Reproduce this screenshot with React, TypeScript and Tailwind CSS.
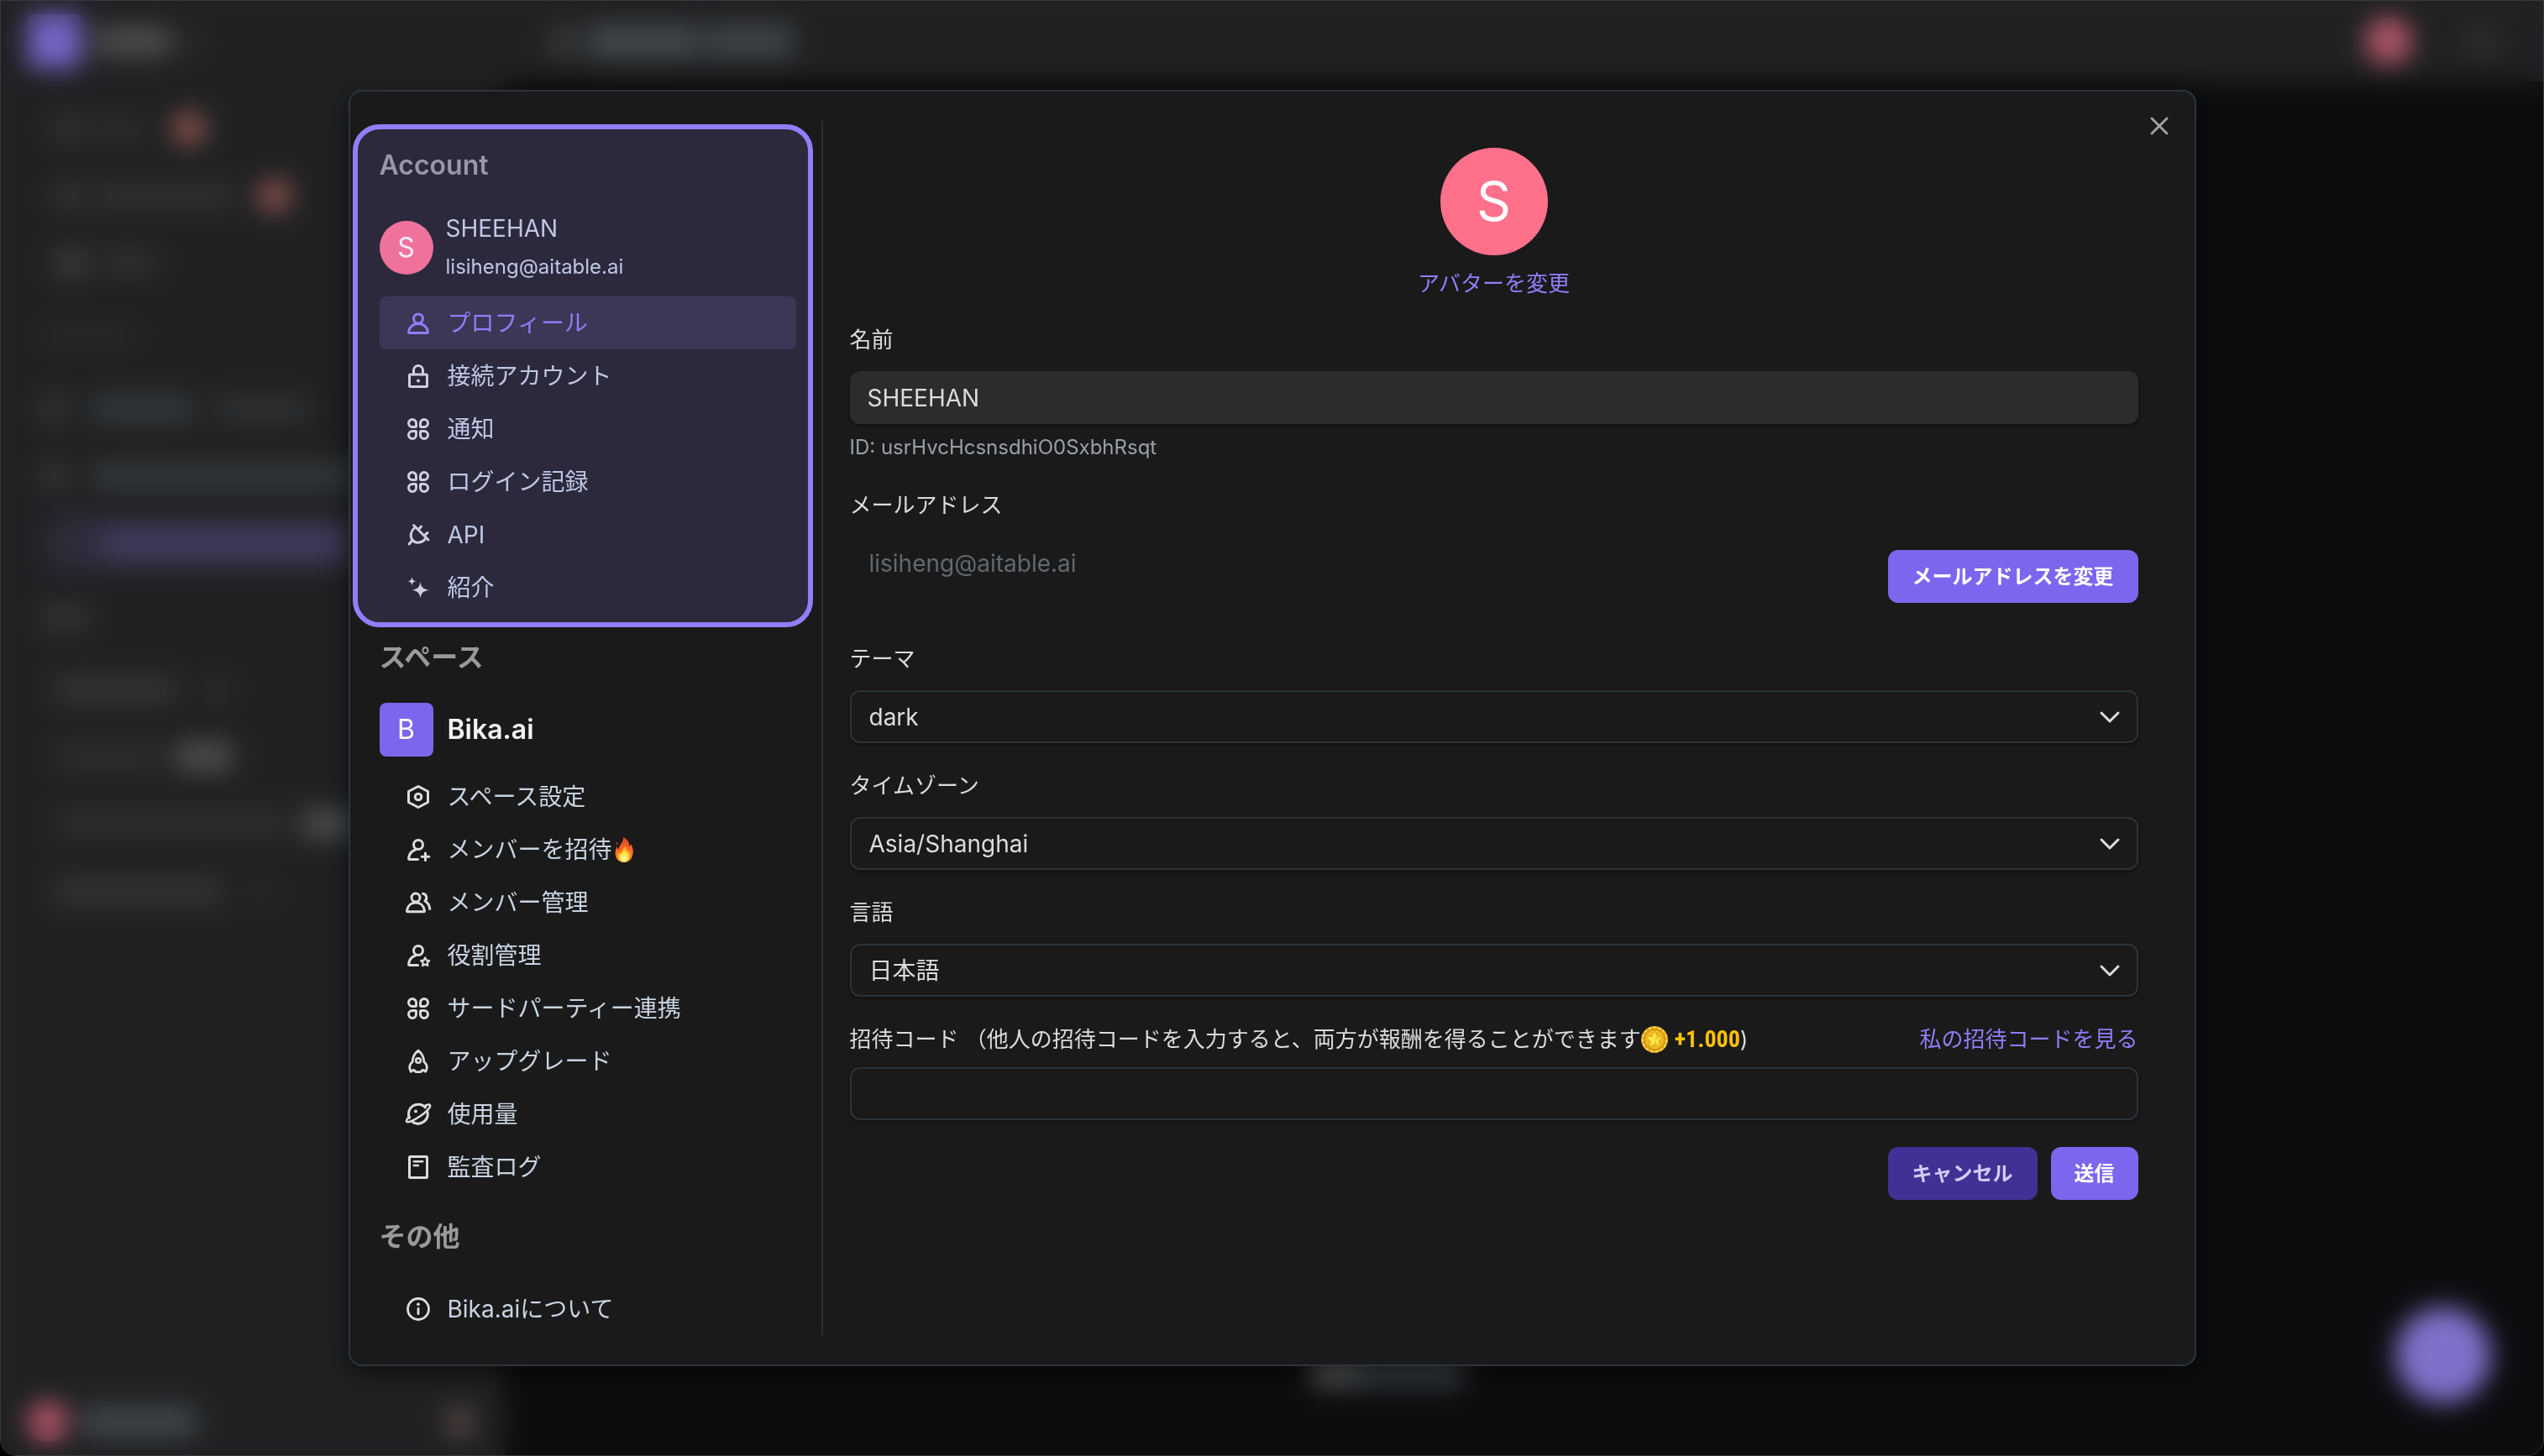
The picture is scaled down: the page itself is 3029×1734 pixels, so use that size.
import type { ReactNode } from "react";

type IconProps = { children: ReactNode };

function Icon({ children }: IconProps) {
  return (
    <svg
      viewBox="0 0 32 32"
      className="size-8 shrink-0"
      fill="none"
      stroke="currentColor"
      strokeWidth="3"
      strokeLinecap="round"
      strokeLinejoin="round"
      aria-hidden="true"
    >
      {children}
    </svg>
  );
}

const UserIcon = () => (
  <Icon>
    <circle cx="16" cy="10.5" r="5.5" />
    <path d="M5.6 27.5h20.8a1.1 1.1 0 0 0 1.1-1.3C26.6 20.5 22 16.5 16 16.5S5.4 20.5 4.5 26.2a1.1 1.1 0 0 0 1.1 1.3z" />
  </Icon>
);
const LockIcon = () => (
  <Icon>
    <rect x="5.5" y="14" width="21" height="14.5" rx="1" />
    <path d="M10.5 14V9a5.5 5.5 0 0 1 11 0v5" />
    <circle cx="16" cy="21.5" r="2" fill="currentColor" stroke="none" />
  </Icon>
);
const PetalsIcon = () => (
  <Icon>
    <path d="M13.5 9a4.5 4.5 0 1 0-4.5 4.5h3.5a1 1 0 0 0 1-1z" />
    <path d="M18.5 9a4.5 4.5 0 1 1 4.5 4.5h-3.5a1 1 0 0 1-1-1z" />
    <path d="M13.5 23a4.5 4.5 0 1 1-4.5-4.5h3.5a1 1 0 0 1 1 1z" />
    <path d="M18.5 23a4.5 4.5 0 1 0 4.5-4.5h-3.5a1 1 0 0 0-1 1z" />
  </Icon>
);
const PlugIcon = () => (
  <Icon>
    <path d="M10.5 4.500 28 22" />
    <path d="M12.5 6.5C7.5 11 5.5 17 9 22c4 5 11.500 4 16.500-2.500" />
    <path d="M9 22.500 5 27" />
    <path d="m16.500 9.500 3-3.500M23.500 16.500l3.500-3" />
  </Icon>
);
const SparkleIcon = () => (
  <Icon>
    <g fill="currentColor" stroke="none">
      <path d="M18.500 9c1 6 3 8.500 10.500 9.800-7.500 1.200-9.500 3.700-10.500 9.700-1-6-3-8.500-9.800-9.700C15.500 17.500 17.500 15 18.500 9z" />
      <path d="M8.500 3c.6 3.600 1.600 4.600 5 5.300-3.400.7-4.400 1.700-5 5.300-.6-3.600-1.600-4.600-5.300-5.300C6.900 7.600 7.900 6.600 8.500 3z" />
    </g>
  </Icon>
);
const HexIcon = () => (
  <Icon>
    <path d="M16 3.5 27.5 9.5v13L16 28.5 4.5 22.5v-13z" />
    <circle cx="16" cy="16" r="3.8" />
  </Icon>
);
const UserPlusIcon = () => (
  <Icon>
    <circle cx="16" cy="10" r="5.5" />
    <path d="M15.5 27.5H5.6a1.1 1.1 0 0 1-1.1-1.3c.7-5 3.7-8.7 8-10.2" />
    <path d="M24.5 20v8.500M20.200 24.200h8.600" />
  </Icon>
);
const UsersIcon = () => (
  <Icon>
    <circle cx="13" cy="10" r="5" />
    <path d="M3.5 26.8h19a1 1 0 0 0 1-1.2C22.7 19.5 18.5 16 13 16S3.300 19.500 2.500 25.600a1 1 0 0 0 1 1.200z" />
    <path d="M21.500 5.200a5 5 0 0 1 2.500 8.800c3.500 2 5.300 5 5.800 9.500" />
  </Icon>
);
const UserStarIcon = () => (
  <Icon>
    <circle cx="16" cy="10" r="5.5" />
    <path d="M15.5 27.5H5.6a1.1 1.1 0 0 1-1.1-1.3c.7-5 3.7-8.7 8-10.2" />
    <path
      strokeWidth="2.2"
      d="m24.200 18.500 1.600 3.100 3.400.5-2.500 2.400.6 3.500-3.100-1.600-3.100 1.600.6-3.500-2.500-2.400 3.400-.5z"
    />
  </Icon>
);
const RocketIcon = () => (
  <Icon>
    <path
      strokeWidth="2.8"
      d="M16 3.200c-4.600 3.600-6.800 8.600-6.800 13.300-2.200 1.800-3.500 4-3.500 6.500 0 2 .6 3.700 1.600 5.300 1.200-1.200 2.400-1.800 3.800-1.800l1.900 2.200h6l1.900-2.200c1.400 0 2.600.6 3.800 1.800 1-1.600 1.600-3.300 1.600-5.300 0-2.500-1.300-4.700-3.500-6.500 0-4.700-2.200-9.700-6.800-13.300z"
    />
    <circle cx="16" cy="15" r="2.8" strokeWidth="2.6" />
  </Icon>
);
const PlanetIcon = () => (
  <Icon>
    <path d="M24.500 8A11.500 11.500 0 0 0 5.500 20.500" />
    <path d="M9 25A11.500 11.500 0 0 0 27 13.500" />
    <path
      strokeWidth="2.6"
      d="M23 6.500c3.600-1.900 6.300-2.400 7-1.200 1.200 2-4 8-12 13.200S3.400 26.600 2.200 24.600c-.7-1.200.6-3.400 3.300-6"
    />
    <circle cx="13" cy="12.500" r="2" fill="currentColor" stroke="none" />
  </Icon>
);
const LogIcon = () => (
  <Icon>
    <rect x="5.5" y="3.5" width="21" height="25" rx="1" />
    <path strokeWidth="2.6" d="M10.800 9.200h10.400M10.800 14h5" />
  </Icon>
);
const InfoIcon = () => (
  <Icon>
    <circle cx="16" cy="16" r="12.500" strokeWidth="2.8" />
    <path d="M16 15.500v6.300" strokeWidth="2.8" />
    <circle cx="16" cy="10.300" r="1.9" fill="currentColor" stroke="none" />
  </Icon>
);

const Flame = () => (
  <svg viewBox="0 0 28 34" className="h-8 w-7 shrink-0" role="img" aria-label="炎">
    <defs>
      <linearGradient id="flameOuter" x1="0" y1="0" x2="0" y2="1">
        <stop offset="0" stopColor="#e8401c" />
        <stop offset="0.5" stopColor="#fb6a21" />
        <stop offset="1" stopColor="#fd9a22" />
      </linearGradient>
      <radialGradient id="flameInner" cx="0.5" cy="0.8" r="0.7">
        <stop offset="0" stopColor="#fffbc0" />
        <stop offset="0.5" stopColor="#ffe23c" />
        <stop offset="1" stopColor="#fd9a22" />
      </radialGradient>
    </defs>
    <path
      fill="url(#flameOuter)"
      d="M13 1c6 3 8 7 7.500 12 1.200-.8 1.600-2.200 1.500-3.800C25 13 26 17.500 25.200 22 24 29 19.500 33 14 33S3.500 29 3 22.500C2.700 18.500 4 15 5 12.500c.4 2 1 3.500 2.300 4.500C7 11.500 13.500 8 13 1z"
    />
    <path fill="#e8401c" d="M5 7c1.500 1.500 1.500 3 .5 4.500C4.300 10.300 4.300 8.700 5 7z" />
    <path
      fill="url(#flameInner)"
      d="M14.500 12c3 3 2.500 6 3.500 8 .8-.5 1.200-1.400 1.400-2.300C21.500 21 22 24 20.800 27c-1.300 3.600-3.900 5.300-6.800 5.300-3.500 0-6.300-2.300-7-5.800-.5-2.700.3-4.800 1.500-6.500.4 1.300 1 2 2 2.500.2-4.500 4.200-6 4-10.500z"
    />
  </svg>
);

const Coin = () => (
  <svg viewBox="0 0 32 32" className="size-8 shrink-0" aria-hidden="true">
    <circle cx="16" cy="16" r="16" fill="#e0a016" />
    <circle cx="16" cy="16" r="14.500" fill="none" stroke="#f6d65a" strokeWidth="2" strokeDasharray="4 2" />
    <circle cx="16" cy="16" r="12" fill="#eeb91f" stroke="#c98a10" strokeWidth="1" />
    <path
      fill="#fbe648"
      stroke="#d39a12"
      strokeWidth="0.8"
      strokeLinejoin="round"
      d="m16 5.500 3.100 6.700 7.200.9-5.300 5 1.400 7.200-6.400-3.600-6.400 3.600 1.400-7.200-5.300-5 7.200-.9z"
    />
    <path fill="#f3c92c" d="M16 5.500v11.200l6.400 8.600-6.400-3.600zM26.300 13.100 16 16.700l3.100-4.500z" />
  </svg>
);

const Chevron = () => (
  <svg
    viewBox="0 0 32 32"
    className="pointer-events-none absolute top-4 right-[18px] size-8 text-[#dcdcdc]"
    fill="none"
    stroke="currentColor"
    strokeWidth="3"
    strokeLinecap="round"
    strokeLinejoin="round"
    aria-hidden="true"
  >
    <path d="m6 11 10 10 10-10" />
  </svg>
);

type Item = { label: string; icon: ReactNode; active?: boolean; flame?: boolean };

const accountItems: Item[] = [
  { label: "プロフィール", icon: <UserIcon />, active: true },
  { label: "接続アカウント", icon: <LockIcon /> },
  { label: "通知", icon: <PetalsIcon /> },
  { label: "ログイン記録", icon: <PetalsIcon /> },
  { label: "API", icon: <PlugIcon /> },
  { label: "紹介", icon: <SparkleIcon /> },
];
const spaceItems: Item[] = [
  { label: "スペース設定", icon: <HexIcon /> },
  { label: "メンバーを招待", icon: <UserPlusIcon />, flame: true },
  { label: "メンバー管理", icon: <UsersIcon /> },
  { label: "役割管理", icon: <UserStarIcon /> },
  { label: "サードパーティー連携", icon: <PetalsIcon /> },
  { label: "アップグレード", icon: <RocketIcon /> },
  { label: "使用量", icon: <PlanetIcon /> },
  { label: "監査ログ", icon: <LogIcon /> },
];
const otherItems: Item[] = [{ label: "Bika.aiについて", icon: <InfoIcon /> }];

function Menu({ items }: { items: Item[] }) {
  return (
    <ul>
      {items.map((item) => (
        <li key={item.label}>
          <button
            type="button"
            aria-current={item.active ? "page" : undefined}
            className={
              item.active
                ? "flex h-[63px] w-full items-center gap-[19px] rounded-lg bg-[#2f2b3b] pl-[30px] text-left text-[28px] text-[#8f7ef8]"
                : "flex h-[63px] w-full items-center gap-[19px] rounded-lg pl-[30px] text-left text-[28px] text-[#dcdcdc]"
            }
          >
            {item.icon}
            <span className={item.active ? "flex items-center" : "flex items-center text-[#c8d3e2]"}>
              {item.label}
              {item.flame && <Flame />}
            </span>
          </button>
        </li>
      ))}
    </ul>
  );
}

function Heading({ children }: { children: ReactNode }) {
  return <h2 className="mb-8 text-[32px] leading-10 font-semibold text-[#9a9a9a]">{children}</h2>;
}

function Sidebar() {
  return (
    <nav className="w-[563px] shrink-0 border-r-2 border-[#303030] pt-[33px] pr-[30px] pl-[35px]">
      <section className="relative">
        <Heading>Account</Heading>
        <div className="mb-3 flex items-center gap-[15px]">
          <span className="flex size-16 shrink-0 items-center justify-center rounded-full bg-[#ff708b] text-[32px] text-white">
            S
          </span>
          <div className="text-[#c8d3e2]">
            <p className="text-[28px] leading-[46px]">SHEEHAN</p>
            <p className="text-[24px] leading-[46px]">lisiheng@aitable.ai</p>
          </div>
        </div>
        <Menu items={accountItems} />
        <div className="pointer-events-none absolute -top-[29px] -right-5 -bottom-4 -left-8 rounded-[32px] border-[6px] border-[#907ff8] bg-[#907ff8]/15" />
      </section>
      <section className="mt-8">
        <Heading>スペース</Heading>
        <div className="mb-4 flex items-center gap-[17px] pt-0.5">
          <span className="flex size-16 shrink-0 items-center justify-center rounded-lg bg-[#7b67ee] text-[32px] text-white">
            B
          </span>
          <p className="text-[32px] leading-10 font-semibold text-[#f3f4f8]">Bika.ai</p>
        </div>
        <Menu items={spaceItems} />
      </section>
      <section className="mt-8">
        <Heading>その他</Heading>
        <div className="pt-0.5">
          <Menu items={otherItems} />
        </div>
      </section>
    </nav>
  );
}

function SelectField({ id, label, value, options }: { id: string; label: string; value: string; options: string[] }) {
  return (
    <div>
      <label htmlFor={id} className="mb-[18px] block text-[26px] leading-[38px] text-[#dcdcdc]">
        {label}
      </label>
      <div className="relative">
        <select
          id={id}
          defaultValue={value}
          className="h-[63px] w-full appearance-none rounded-xl border-2 border-[#2d333b] bg-[#1a1a1a] px-[21px] text-[28px] text-[#dcdcdc] shadow-[0_2px_4px_rgba(0,0,0,0.4)]"
        >
          {options.map((option) => (
            <option key={option}>{option}</option>
          ))}
        </select>
        <Chevron />
      </div>
    </div>
  );
}

function ProfileForm() {
  return (
    <form className="min-w-0 flex-1 pt-8 pr-[67px] pl-8" onSubmit={(event) => event.preventDefault()}>
      <div className="flex flex-col items-center gap-[14px]">
        <span className="flex size-32 items-center justify-center rounded-full bg-[#ff708b] text-[64px] text-white">S</span>
        <button type="button" className="text-[26px] leading-10 text-[#8f7ef8]">
          アバターを変更
        </button>
      </div>

      <div className="mt-7">
        <label htmlFor="name" className="mb-[18px] block text-[26px] leading-[38px] text-[#dcdcdc]">
          名前
        </label>
        <input
          id="name"
          defaultValue="SHEEHAN"
          className="block h-[63px] w-full rounded-xl bg-[#2c2c2c] px-[21px] text-[28px] text-[#dcdcdc] shadow-[0_2px_4px_rgba(0,0,0,0.4)]"
        />
        <p className="mt-[10px] text-[24px] leading-9 text-[#99a0aa]">ID: usrHvcHcsnsdhiO0SxbhRsqt</p>
      </div>

      <div className="mt-8">
        <label htmlFor="email" className="mb-[18px] block text-[26px] leading-[38px] text-[#dcdcdc]">
          メールアドレス
        </label>
        <div className="flex items-start gap-4">
          <input
            id="email"
            disabled
            defaultValue="lisiheng@aitable.ai"
            className="h-[63px] min-w-0 flex-1 rounded-xl border-2 border-[#191b1d] px-[21px] text-[28px] text-[#616870]"
          />
          <button
            type="button"
            className="mt-4 h-[63px] rounded-xl bg-[#7b67ee] px-[29px] text-[24px] font-bold text-white"
          >
            メールアドレスを変更
          </button>
        </div>
      </div>

      <div className="mt-12 flex flex-col gap-8">
        <SelectField id="theme" label="テーマ" value="dark" options={["dark", "light"]} />
        <SelectField id="timezone" label="タイムゾーン" value="Asia/Shanghai" options={["Asia/Shanghai", "Asia/Tokyo"]} />
        <SelectField id="language" label="言語" value="日本語" options={["日本語", "English"]} />
        <div>
          <div className="mb-[14px] flex items-center justify-between text-[26px] leading-[38px] text-[#dcdcdc]">
            <label htmlFor="invite" className="flex items-center whitespace-pre">
              招待コード （他人の招待コードを入力すると、両方が報酬を得ることができます
              <Coin />
              <span className="ml-2 font-['Liberation_Sans_Narrow','Roboto_Condensed',Roboto] text-[28px] font-bold text-[#ffc107]">
                +1.000
              </span>
              )
            </label>
            <a href="#invite-code" className="text-[#8f7ef8]">
              私の招待コードを見る
            </a>
          </div>
          <input
            id="invite"
            className="block h-[63px] w-full rounded-xl border-2 border-[#2d333b] px-[22px] text-[28px] text-[#dcdcdc] shadow-[0_2px_4px_rgba(0,0,0,0.4)]"
          />
        </div>
      </div>

      <div className="mt-8 flex justify-end gap-4">
        <button type="button" className="h-[63px] rounded-xl bg-[#403195] px-[29px] text-[24px] font-bold text-[#d3cbfb]">
          キャンセル
        </button>
        <button type="submit" className="h-[63px] rounded-xl bg-[#7b67ee] px-7 text-[24px] font-bold text-white">
          送信
        </button>
      </div>
    </form>
  );
}

function Backdrop() {
  return (
    <div
      aria-hidden="true"
      className="absolute inset-0 flex overflow-hidden rounded-b-[20px] border border-[#36393c] bg-[#0c0d0f]"
    >
      <div className="flex w-[600px] shrink-0 flex-col bg-[#202123] px-8 py-4">
        <div className="flex h-16 items-center gap-4">
          <div className="size-16 rounded-lg bg-[#7564c6]" />
          <div className="h-9 w-[90px] bg-[#4c4d4e]" />
          <div className="h-5 w-4 bg-[#333436]" />
        </div>
        <div className="mt-8 flex h-20 items-center pl-8">
          <div className="h-7 w-8 bg-[#353638]" />
          <div className="ml-3 h-6 w-16 bg-[#2d2e30]" />
          <div className="ml-8 size-10 rounded-full bg-[#8a524c]" />
        </div>
        <div className="flex h-20 items-center pl-8">
          <div className="h-7 w-8 bg-[#353638]" />
          <div className="ml-3 h-7 w-[170px] bg-[#303133]" />
          <div className="ml-7 size-10 rounded-full bg-[#8a524c]" />
        </div>
        <div className="flex h-20 items-center gap-4 pl-8">
          <div className="h-9 w-10 bg-[#38393b]" />
          <div className="h-7 w-16 bg-[#303133]" />
        </div>
        <div className="mt-9 ml-4 h-5 w-28 bg-[#292a2c]" />
        <div className="mt-[38px] flex h-20 items-center gap-7 pl-4">
          <div className="size-8 bg-[#343537]" />
          <div className="h-8 w-[120px] bg-[#34393b]" />
          <div className="h-7 w-[110px] bg-[#2f3234]" />
        </div>
        <div className="flex h-20 items-center gap-7 pl-4">
          <div className="size-8 bg-[#343537]" />
          <div className="h-8 w-[350px] bg-[#34383a]" />
        </div>
        <div className="mt-2 ml-6 flex h-16 items-center rounded-lg bg-[#2e2c3b] pl-16">
          <div className="h-8 w-[290px] bg-[#433d62]" />
        </div>
        <div className="mt-[42px] ml-4 h-7 w-14 bg-[#343537]" />
        <div className="mt-8 flex h-20 items-center pl-8">
          <div className="h-8 w-36 bg-[#333436]" />
          <div className="ml-8 h-6 w-8 bg-[#2c2d2f]" />
        </div>
        <div className="flex h-20 items-center gap-4 pl-8">
          <div className="h-7 w-32 bg-[#2e2f31]" />
          <div className="h-9 w-[68px] bg-[#4b4c4e]" />
        </div>
        <div className="flex h-20 items-center gap-4 pl-8">
          <div className="h-7 w-[280px] bg-[#2e2f31]" />
          <div className="h-9 w-16 bg-[#4b4c4e]" />
        </div>
        <div className="flex h-20 items-center gap-8 pl-8">
          <div className="h-8 w-[200px] bg-[#323335]" />
          <div className="h-6 w-6 bg-[#2b2c2e]" />
        </div>
        <div className="mt-auto flex h-12 items-center">
          <div className="size-12 rounded-full bg-[#b25568]" />
          <div className="ml-4 h-9 w-[136px] bg-[#414649]" />
          <div className="mr-2 ml-auto h-9 w-7 bg-[#564744]" />
        </div>
      </div>
      <div className="flex min-w-0 flex-1 flex-col">
        <div className="flex h-24 items-center bg-[#202123] px-14">
          <div className="h-9 w-7 bg-[#3b3d3e]" />
          <div className="ml-4 h-10 w-[130px] bg-[#43484b]" />
          <div className="ml-2 h-10 w-[105px] bg-[#3f4447]" />
          <div className="mr-16 ml-auto size-14 rounded-full bg-[#b05667]" />
          <div className="h-6 w-9 bg-[#323335]" />
        </div>
        <div className="flex flex-1 items-end justify-end pr-[62px] pb-[62px]">
          <div className="mr-auto mb-5 ml-[960px] flex h-14">
            <div className="w-14 bg-[#505355]" />
            <div className="w-[126px] bg-[#383d40]" />
          </div>
          <div className="size-[114px] rounded-full bg-[#7f70c9]" />
        </div>
      </div>
      <div className="absolute inset-0 backdrop-blur-[15px]" />
    </div>
  );
}

export default function App() {
  return (
    <div
      lang="ja"
      className="relative flex min-h-screen items-center justify-center bg-[#050505] font-['Inter','Noto_Sans_CJK_JP',sans-serif]"
    >
      <Backdrop />
      <main
        role="dialog"
        aria-label="Account"
        className="relative flex w-full max-w-[2200px] rounded-2xl border-2 border-[#2d353d] bg-[#1a1a1a] py-[35px] shadow-[0_8px_32px_rgba(0,0,0,0.6)]"
      >
        <Sidebar />
        <ProfileForm />
        <button
          type="button"
          aria-label="閉じる"
          className="absolute top-[21px] right-[22px] flex size-10 items-center justify-center text-[#9fa6ad]"
        >
          <svg viewBox="0 0 24 24" className="size-6" fill="none" stroke="currentColor" strokeWidth="2.8" strokeLinecap="round">
            <path d="M3 3l18 18M21 3 3 21" />
          </svg>
        </button>
      </main>
    </div>
  );
}
